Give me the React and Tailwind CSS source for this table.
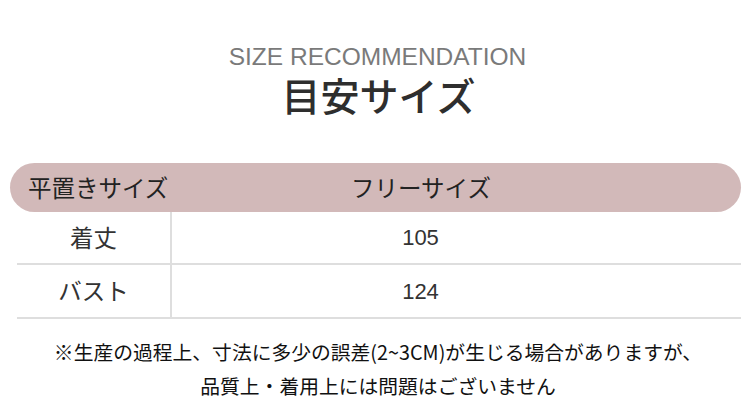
export default function App() {
  const jp = { fontFamily: '"Noto Sans CJK JP", "Noto Sans", sans-serif' };
  return (
    <div className="w-[750px] h-[417px] bg-white overflow-hidden flex flex-col" style={jp}>
      <div
        className="mt-[43px] text-center text-[24.5px] leading-[28px] text-[#7a7a7a] pl-[5px]"
        style={{ fontFamily: '"Liberation Sans", Arial, sans-serif' }}
      >
        SIZE RECOMMENDATION
      </div>
      <div className="mt-[2px] text-center text-[39px] leading-[42px] font-medium text-[#2e2e2e] pl-[7px]">
        目安サイズ
      </div>

      <div className="mt-[48px] ml-[10px] w-[731px] h-[49px] rounded-full bg-[#d2b9b9] flex items-center text-[23.5px] text-[#222]">
        <div className="w-[162px] pl-[18px] whitespace-nowrap">平置きサイズ</div>
        <div className="flex-1 text-center pr-[71px]">フリーサイズ</div>
      </div>

      <div className="ml-[17px] w-[724px] text-[23.5px] text-[#333]">
        <div className="flex h-[53px] border-b-2 border-[#dedede]">
          <div className="w-[155px] border-r-2 border-[#dedede] flex items-center justify-center">着丈</div>
          <div
            className="flex-1 flex items-center justify-center pr-[72px] text-[22px]"
            style={{ fontFamily: '"Liberation Sans", Arial, sans-serif' }}
          >
            105
          </div>
        </div>
        <div className="flex h-[54px] border-b-2 border-[#dedede]">
          <div className="w-[155px] border-r-2 border-[#dedede] flex items-center justify-center">バスト</div>
          <div
            className="flex-1 flex items-center justify-center pr-[72px] text-[22px]"
            style={{ fontFamily: '"Liberation Sans", Arial, sans-serif' }}
          >
            124
          </div>
        </div>
      </div>

      <div className="mt-[16px] text-center text-[19.8px] leading-[34px] text-[#111] pl-[6px]">
        <div>※生産の過程上、寸法に多少の誤差(2~3CM)が生じる場合がありますが、</div>
        <div>品質上・着用上には問題はございません</div>
      </div>
    </div>
  );
}
